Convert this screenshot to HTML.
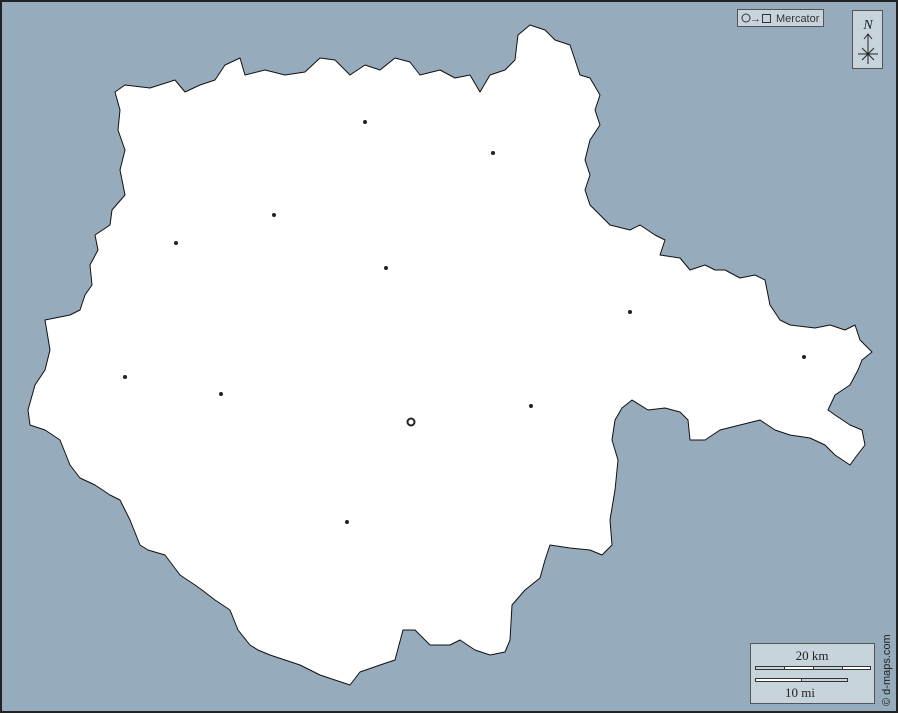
<!DOCTYPE html>
<html><head><meta charset="utf-8"><style>
html,body{margin:0;padding:0;width:898px;height:713px;overflow:hidden;background:#96abbb}
svg{display:block}
</style></head><body>
<svg width="898" height="713" viewBox="0 0 898 713" xmlns="http://www.w3.org/2000/svg">
<rect x="1" y="1" width="896" height="711" fill="#96abbb" stroke="#222" stroke-width="2"/>
<polygon fill="#fff" stroke="#111" stroke-width="1" stroke-linejoin="round" points="115,92 125,85 150,88 175,80 185,92 200,85 215,80 225,65 240,58 245,75 265,70 285,75 305,72 320,58 335,60 350,75 365,65 380,70 395,58 410,62 420,75 440,70 455,78 470,75 480,92 490,75 505,70 515,60 518,35 530,25 545,30 555,40 570,45 575,60 580,75 590,78 600,95 595,110 600,125 590,140 585,160 590,175 585,190 590,205 600,215 610,225 630,230 640,225 655,235 665,240 660,255 680,258 690,270 705,265 715,270 725,270 740,278 755,275 765,280 770,305 780,320 790,325 815,328 830,325 845,330 855,325 860,340 872,352 862,360 858,370 850,385 835,395 828,410 835,415 850,425 862,430 865,445 855,458 850,465 835,455 825,445 810,438 790,435 775,430 760,420 740,425 720,430 705,440 690,440 688,420 680,412 665,408 648,410 632,400 622,408 615,420 612,440 618,460 615,490 610,520 612,545 602,555 590,550 570,548 550,545 545,560 540,578 525,590 512,605 510,640 505,652 490,655 475,650 460,640 450,645 430,645 415,630 403,630 395,660 380,665 360,672 350,685 335,680 320,675 300,665 285,660 270,655 258,650 250,645 238,630 230,610 215,600 202,590 195,585 180,575 165,555 148,550 140,545 130,520 120,500 110,495 95,485 80,478 70,465 60,440 45,430 30,425 28,410 35,385 45,370 50,350 45,320 70,315 80,310 85,295 92,285 90,265 98,250 95,235 110,225 112,210 125,195 120,170 125,150 118,130 120,110"/>
<g fill="#222">
<circle cx="365" cy="122" r="2"/><circle cx="493" cy="153" r="2"/><circle cx="274" cy="215" r="2"/>
<circle cx="176" cy="243" r="2"/><circle cx="386" cy="268" r="2"/><circle cx="630" cy="312" r="2"/>
<circle cx="804" cy="357" r="2"/><circle cx="125" cy="377" r="2"/><circle cx="221" cy="394" r="2"/>
<circle cx="531" cy="406" r="2"/><circle cx="347" cy="522" r="2"/>
</g>
<circle cx="411" cy="422" r="3.5" fill="none" stroke="#222" stroke-width="2"/>
<rect x="737.5" y="9.5" width="86" height="17" fill="#c8d4dc" stroke="#555"/>
<circle cx="746" cy="18" r="4" fill="none" stroke="#333"/>
<text x="750" y="22" font-family="Liberation Sans, sans-serif" font-size="11" fill="#333">→</text>
<rect x="762.5" y="14.5" width="8" height="8" fill="none" stroke="#333"/>
<text x="776" y="22" font-family="Liberation Sans, sans-serif" font-size="11" fill="#333">Mercator</text>
<rect x="852.5" y="10.5" width="30" height="58" fill="#c8d4dc" stroke="#555"/>
<text x="868" y="29" text-anchor="middle" font-family="Liberation Serif, serif" font-style="italic" font-size="14" fill="#222">N</text>
<g stroke="#222" stroke-width="1" fill="none">
<line x1="868" y1="34" x2="868" y2="64"/><polyline points="864,39 868,34 872,39"/>
<line x1="858" y1="54" x2="878" y2="54"/><line x1="862" y1="48" x2="874" y2="60"/><line x1="874" y1="48" x2="862" y2="60"/>
</g>
<rect x="750.5" y="643.5" width="124" height="60" fill="#c8d4dc" stroke="#555"/>
<text x="812" y="660" text-anchor="middle" font-family="Liberation Serif, serif" font-size="13" fill="#222">20 km</text>
<g stroke="#333" stroke-width="1">
<rect x="755.5" y="666.5" width="29" height="3" fill="#c8d4dc"/><rect x="784.5" y="666.5" width="29" height="3" fill="#fff"/>
<rect x="813.5" y="666.5" width="29" height="3" fill="#c8d4dc"/><rect x="842.5" y="666.5" width="28" height="3" fill="#fff"/>
<rect x="755.5" y="678.5" width="46" height="3" fill="#fff"/><rect x="801.5" y="678.5" width="46" height="3" fill="#c8d4dc"/>
</g>
<text x="800" y="697" text-anchor="middle" font-family="Liberation Serif, serif" font-size="13" fill="#222">10 mi</text>
<text transform="translate(890,706) rotate(-90)" font-family="Liberation Sans, sans-serif" font-size="11" fill="#222">© d-maps.com</text>
</svg>
</body></html>
